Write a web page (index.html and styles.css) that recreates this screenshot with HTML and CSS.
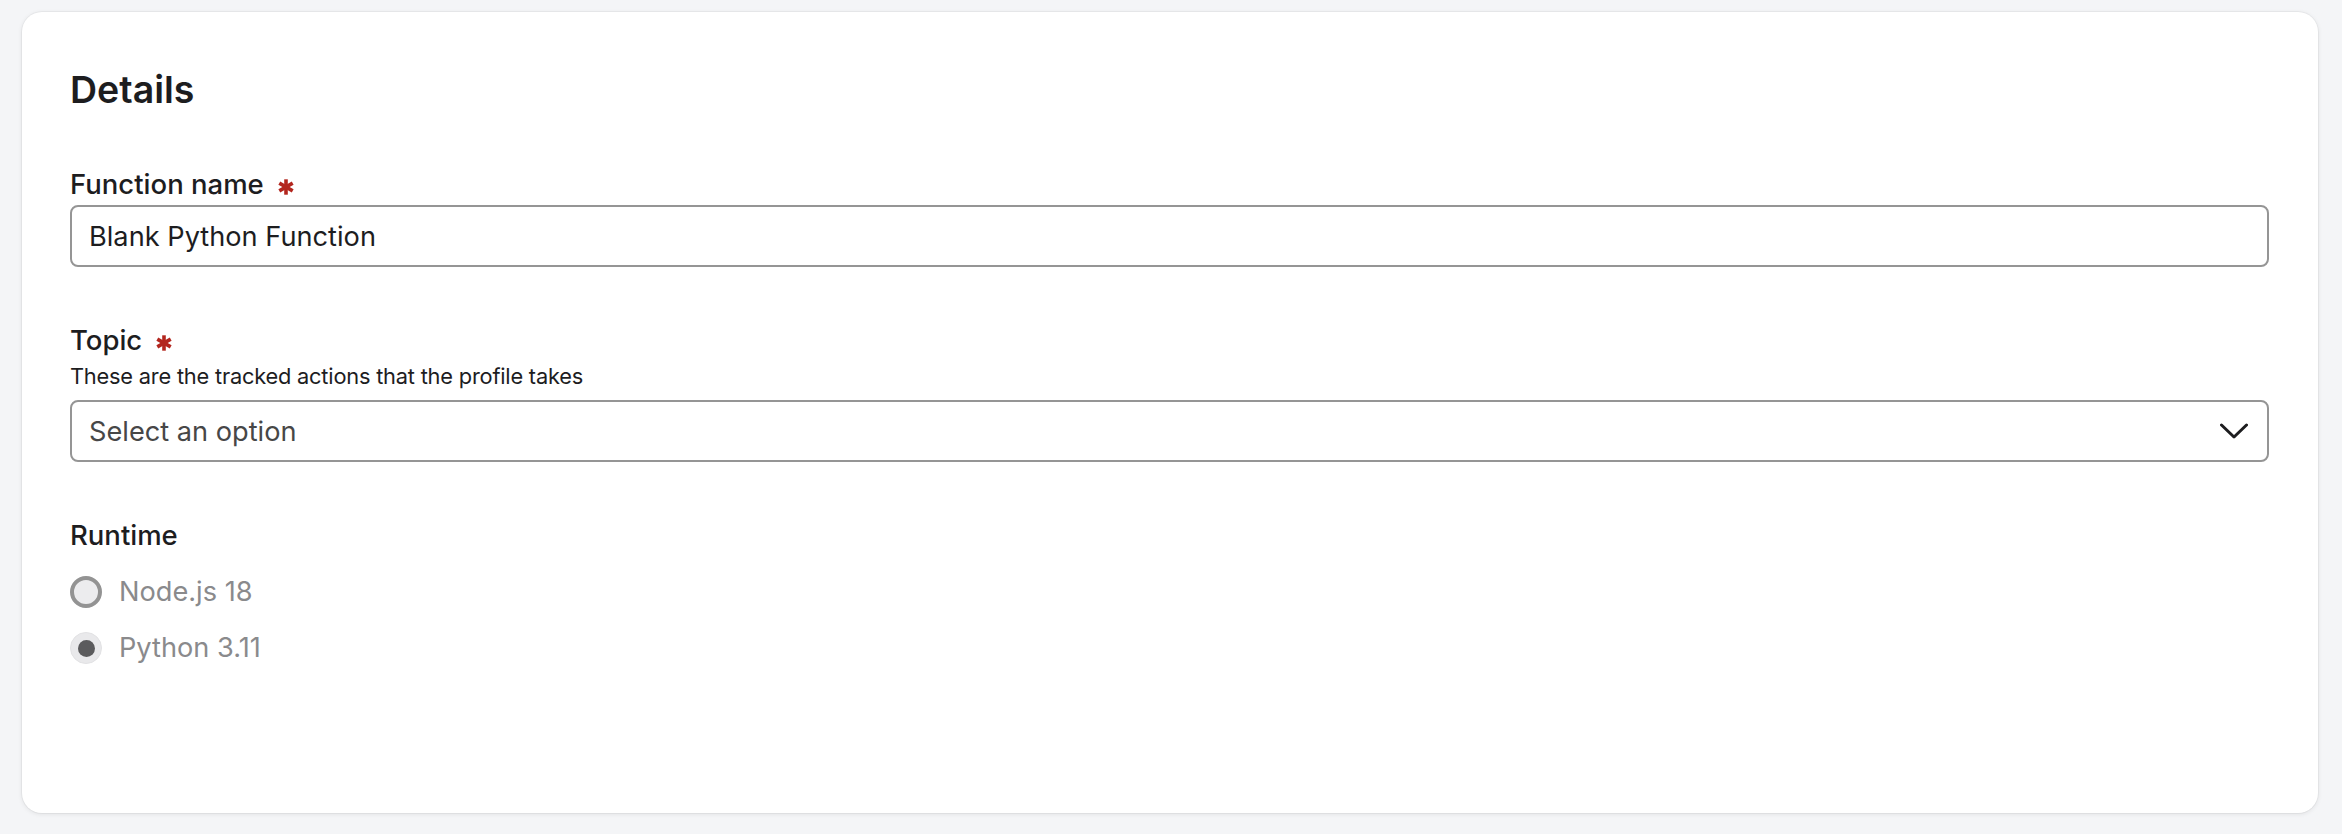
FILE: index.html
```html
<!DOCTYPE html>
<html lang="en">
<head>
<meta charset="utf-8">
<title>Details</title>
<link rel="stylesheet" href="styles.css">
</head>
<body>
  <section class="card">
    <h2 class="card-title">Details</h2>

    <div class="field">
      <label class="field-label" for="fn-name">Function name
        <svg class="req" viewBox="0 0 16 16" aria-hidden="true"><g stroke="currentColor" stroke-width="3.6" stroke-linecap="butt"><line x1="8" y1="0.3" x2="8" y2="15.7"/><line x1="1.3" y1="4.15" x2="14.7" y2="11.85"/><line x1="1.3" y1="11.85" x2="14.7" y2="4.15"/></g></svg>
      </label>
      <div class="control">Blank Python Function</div>
    </div>

    <div class="field">
      <div class="field-label">Topic
        <svg class="req" viewBox="0 0 16 16" aria-hidden="true"><g stroke="currentColor" stroke-width="3.6" stroke-linecap="butt"><line x1="8" y1="0.3" x2="8" y2="15.7"/><line x1="1.3" y1="4.15" x2="14.7" y2="11.85"/><line x1="1.3" y1="11.85" x2="14.7" y2="4.15"/></g></svg>
      </div>
      <div class="field-help">These are the tracked actions that the profile takes</div>
      <div class="control control-select">
        <span class="placeholder">Select an option</span>
        <svg class="chevron" viewBox="0 0 28 16" aria-hidden="true"><polyline points="1.5,2 14,14 26.5,2" fill="none" stroke="currentColor" stroke-width="3" stroke-linecap="round" stroke-linejoin="round"/></svg>
      </div>
    </div>

    <div class="field">
      <div class="field-label">Runtime</div>
      <div class="radio-list">
        <div class="radio-row">
          <span class="radio"></span>
          <span class="radio-text">Node.js 18</span>
        </div>
        <div class="radio-row">
          <span class="radio radio-checked"><span class="dot"></span></span>
          <span class="radio-text">Python 3.11</span>
        </div>
      </div>
    </div>
  </section>
</body>
</html>
```

FILE: styles.css
```css
* { box-sizing: border-box; }

html, body {
  margin: 0;
  background: #f4f5f7;
}

body {
  padding: 12px 24px 21px 22px;
  font-family: Inter, "Noto Sans", "Liberation Sans", sans-serif;
  color: #1d1d1f;
}

.card {
  background: #ffffff;
  border-radius: 20px;
  box-shadow: 0 0 0 1px rgba(0, 0, 0, 0.035), 0 1px 5px rgba(0, 0, 0, 0.09);
  padding: 56px 49px 0 48px;
  height: 801px;
  display: flex;
  flex-direction: column;
}

.card-title {
  margin: 0 0 56px;
  font-size: 37.5px;
  line-height: 44px;
  font-weight: 600;
  color: #1d1d1f;
}

.field {
  display: flex;
  flex-direction: column;
  margin-bottom: 57px;
}

.field:last-child { margin-bottom: 0; }

.field-label {
  display: flex;
  align-items: center;
  gap: 14px;
  font-size: 27.5px;
  line-height: 32px;
  font-weight: 500;
  color: #1d1d1f;
  margin-bottom: 5px;
}

.req {
  width: 16px;
  height: 16px;
  color: #b3261e;
  margin-top: 5px;
}

.field-help {
  font-size: 21.8px;
  line-height: 28px;
  letter-spacing: -0.2px;
  color: #1d1d1f;
  margin-top: 1px;
  margin-bottom: 10px;
}

.control {
  height: 62px;
  border: 2px solid #959595;
  border-radius: 8px;
  padding: 0 17px;
  display: flex;
  align-items: center;
  font-size: 27.2px;
  color: #1d1d1f;
  background: #fff;
}

.control-select {
  justify-content: space-between;
  padding-right: 19px;
}

.placeholder { color: #474747; }

.chevron {
  width: 28px;
  height: 16px;
  color: #1d1d1f;
}

.radio-list {
  display: flex;
  flex-direction: column;
  gap: 24px;
  margin-top: 20px;
}

.radio-row {
  display: flex;
  align-items: center;
  gap: 17px;
  height: 32px;
}

.radio {
  width: 32px;
  height: 32px;
  border-radius: 50%;
  border: 4px solid #939393;
  background: #ececee;
  display: flex;
  align-items: center;
  justify-content: center;
  flex: none;
}

.radio-checked {
  border: 1px solid #e2e2e4;
  background: #e9e9eb;
}

.dot {
  width: 17px;
  height: 17px;
  border-radius: 50%;
  background: #5b5b5d;
}

.radio-text {
  font-size: 27.2px;
  line-height: 32px;
  color: #8a8a8c;
}
```
